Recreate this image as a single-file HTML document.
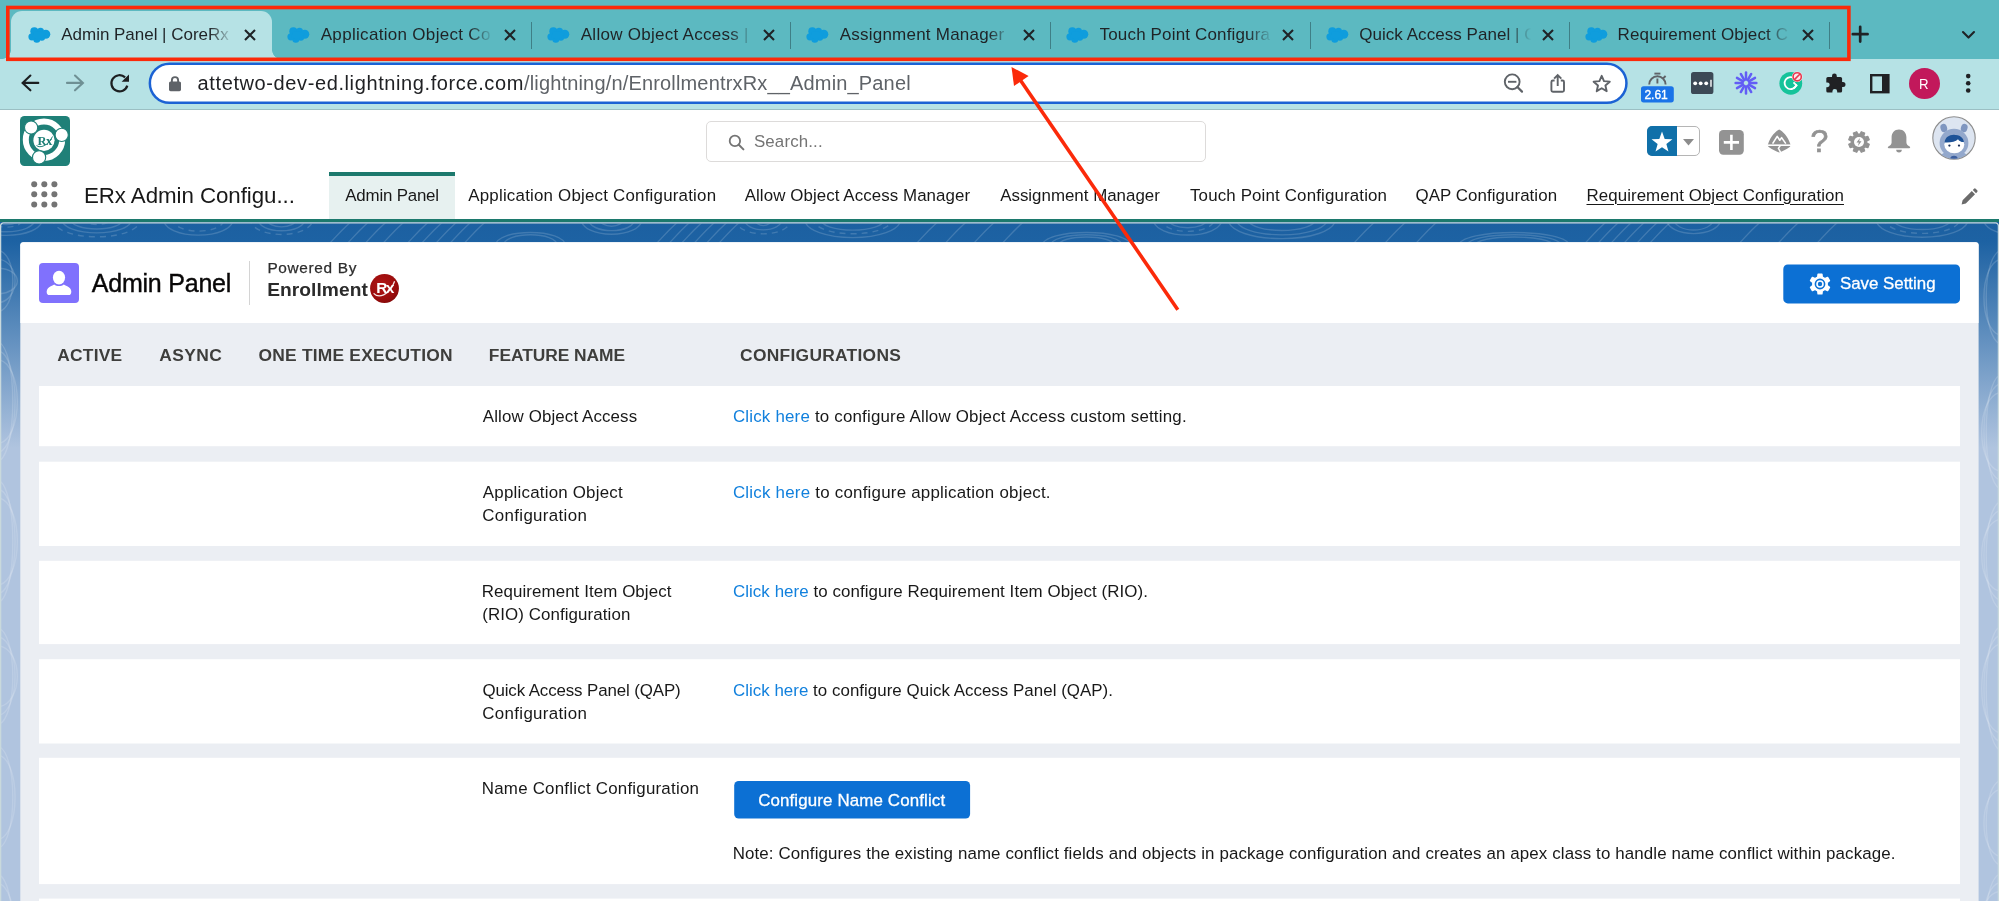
<!DOCTYPE html>
<html lang="en">
<head>
<meta charset="utf-8">
<title>Admin Panel | CoreRx</title>
<style>
html,body{margin:0;padding:0}
body{width:1999px;height:901px;overflow:hidden;position:relative;font-family:"Liberation Sans",sans-serif;background:#fff;color:#181818}
.a{position:absolute}
.t{position:absolute;white-space:nowrap;line-height:1;--f:16.9px;font-size:var(--f);top:calc(var(--b) - var(--f)*0.8465)}
svg{position:absolute;overflow:visible}
/* chrome */
#strip{left:0;top:0;width:1999px;height:59px;background:#5cb9c1}
#atab{left:11px;top:11px;width:261px;height:48px;background:#b6e2e5;border-radius:11px 11px 0 0}
#toolbar{left:0;top:58.5px;width:1999px;height:50px;background:#b6e2e5}
#tbline{left:0;top:108.5px;width:1999px;height:1px;background:#9bbfc3}
#omni{left:148px;top:62.5px;width:1475px;height:36.5px;border:2.5px solid #1b62d4;border-radius:21px;background:#fff}
.tt{--f:17px;--b:39.8px;color:#1f2326}
.fade{-webkit-mask-image:linear-gradient(90deg,#000 0,#000 148px,rgba(0,0,0,.1) 170px,rgba(0,0,0,0) 172px);mask-image:linear-gradient(90deg,#000 0,#000 148px,rgba(0,0,0,.1) 170px,rgba(0,0,0,0) 172px)}
.sep{position:absolute;top:21.5px;width:1.4px;height:27.5px;background:#3f7f86}
/* salesforce */
#sfbg{left:0;top:222px;width:1999px;height:679px;background:linear-gradient(180deg,#1c60a1 0,#1d62a3 20px,#b0c4df 226px,#b0c4df 100%)}
#navline{left:0;top:218.5px;width:1999px;height:4px;background:#1c796d}
#ntab{left:328.5px;top:172px;width:126px;height:46.5px;background:#e7f1f0;border-top:4px solid #1c796d;box-sizing:border-box}
.nv{--f:16.9px;--b:201px;color:#181818}
#card{left:20px;top:242px;width:1958.5px;height:680px;background:#ebeef3;border-radius:3.5px 3.5px 0 0;overflow:hidden}
#chead{left:0;top:0;width:1958px;height:80.5px;background:#fff}
.row{position:absolute;left:19px;width:1921px;background:#fff}
.th{--f:17.4px;--b:360.8px;font-weight:bold;color:#3e3e3c}
.td{--f:16.9px;color:#181818}
.lk{color:#1180dd}
.btn{position:absolute;background:#0c70d4;border-radius:4.5px}
/*LS*/
#tb1{letter-spacing:-0.019px;left:61.24px !important;margin-top:1.0px}
#tb2{letter-spacing:0.310px;left:320.72px !important;margin-top:1.0px}
#tb3{letter-spacing:0.276px;left:580.72px !important;margin-top:1.0px}
#tb4{letter-spacing:0.226px;left:839.72px !important;margin-top:1.0px}
#tb5{letter-spacing:0.153px;left:1099.61px !important;margin-top:1.0px}
#tb6{letter-spacing:0.053px}
#tb7{letter-spacing:0.116px;left:1617.60px !important;margin-top:1.0px}
#tb6o{left:1359.17px !important;margin-top:1.0px}
#urld{letter-spacing:0.608px}
#urlp{letter-spacing:0.165px}
#srch{letter-spacing:0.130px;left:753.94px !important;margin-top:1.0px}
#app{letter-spacing:-0.052px;left:83.99px !important;margin-top:1.0px}
#n1{letter-spacing:-0.201px;left:345.28px !important;margin-top:1.0px}
#n2{letter-spacing:0.209px;left:468.28px !important;margin-top:1.0px}
#n3{letter-spacing:0.076px;left:744.71px !important;margin-top:1.0px}
#n4{letter-spacing:-0.002px;left:1000.22px !important;margin-top:1.0px}
#n5{letter-spacing:0.149px;left:1190.00px !important;margin-top:1.0px}
#n6{letter-spacing:0.065px;left:1415.48px !important;margin-top:1.0px}
#n7{letter-spacing:0.066px;left:1586.50px !important;margin-top:1.0px}
#ttl{letter-spacing:-0.218px;left:91.75px !important;margin-top:0.0px}
#pw{letter-spacing:0.660px;left:267.41px !important;margin-top:0.0px}
#enr{letter-spacing:0.048px;left:267.20px !important;margin-top:1.0px}
#sv{letter-spacing:-0.008px;left:1839.89px !important;margin-top:1.0px}
#h1{letter-spacing:0.232px;left:57.28px !important;margin-top:1.0px}
#h2{letter-spacing:0.439px;left:159.28px !important;margin-top:1.0px}
#h3{letter-spacing:0.208px;left:258.58px !important;margin-top:1.0px}
#h4{letter-spacing:-0.057px;left:488.85px !important;margin-top:1.0px}
#h5{letter-spacing:0.279px;left:740.09px !important;margin-top:1.0px}
#r1a{letter-spacing:0.122px;left:482.86px !important;margin-top:1.0px}
#r1b{letter-spacing:0.198px;left:732.93px !important;margin-top:1.0px}
#r2a{letter-spacing:0.215px;left:482.86px !important;margin-top:1.0px}
#r2a2{letter-spacing:0.340px;left:482.25px !important;margin-top:1.0px}
#r2b{letter-spacing:0.230px;left:732.93px !important;margin-top:1.0px}
#r3a{letter-spacing:0.082px;left:481.80px !important;margin-top:1.0px}
#r3a2{letter-spacing:0.094px;left:482.18px !important;margin-top:1.0px}
#r3b{letter-spacing:0.071px;left:732.93px !important;margin-top:1.0px}
#r4a{letter-spacing:-0.112px;left:482.38px !important;margin-top:1.0px}
#r4a2{letter-spacing:0.340px;left:482.25px !important;margin-top:1.0px}
#r4b{letter-spacing:0.036px;left:732.93px !important;margin-top:1.0px}
#r5a{letter-spacing:0.226px;left:481.80px !important;margin-top:1.0px}
#cnc{letter-spacing:0.135px;left:758.17px !important;margin-top:1.0px}
#note{letter-spacing:0.120px;left:732.71px !important;margin-top:1.0px}
#ext{letter-spacing:-0.065px;left:1644.50px !important;margin-top:0.0px}
/*END*/
</style>
</head>
<body>
<!-- ===== CHROME TAB STRIP ===== -->
<div class="a" id="strip"></div>
<div class="a" id="atab"></div>
<div class="a" style="left:2px;top:50px;width:9px;height:9px;background:radial-gradient(circle at 0 0,rgba(182,226,229,0) 8.5px,#b6e2e5 9.2px)"></div>
<div class="a" style="left:272px;top:50px;width:9px;height:9px;background:radial-gradient(circle at 100% 0,rgba(182,226,229,0) 8.5px,#b6e2e5 9.2px)"></div>
<div class="a" id="toolbar"></div>
<div class="a" id="tbline"></div>
<svg style="left:0;top:0" width="1999" height="110" viewBox="0 0 1999 110"><rect x="149.85" y="63.65" width="1476.6" height="39.1" rx="19.55" fill="#fff" stroke="#1b62d4" stroke-width="2.5"/></svg>

<!-- ===== SALESFORCE ===== -->
<div class="a" id="navline"></div>
<div class="a" id="ntab"></div>
<div class="a" id="sfbg"></div>
<svg style="left:0;top:0" width="1999" height="901" viewBox="0 0 1999 901"><defs><clipPath id="bgc"><rect x="0" y="223.6" width="1999" height="680"/></clipPath></defs><g clip-path="url(#bgc)" fill="none" stroke="#fff" stroke-opacity="0.16" stroke-width="1.4"><path d="M-30.0 218C-30.0 241.1 42.7 241.1 42.7 218"/><path d="M-22.7 218C-22.7 236.3 35.4 236.3 35.4 218"/><path d="M-10.5 218C-10.5 230.2 23.2 230.2 23.2 218" stroke-dasharray="6 5"/><path d="M-8.2 218C-8.2 226.6 20.9 226.6 20.9 218"/><path d="M52.5 218C52.5 243.1 141.1 243.1 141.1 218" stroke-dasharray="6 5"/><path d="M61.4 218C61.4 237.9 132.2 237.9 132.2 218"/><path d="M69.9 218C69.9 232.7 123.6 232.7 123.6 218"/><path d="M82.3 218C82.3 226.6 111.3 226.6 111.3 218" stroke-dasharray="6 5"/><path d="M163.2 218C163.2 240.8 233.5 240.8 233.5 218"/><path d="M172.3 218C172.3 235.5 224.5 235.5 224.5 218" stroke-dasharray="6 5"/><path d="M249.9 218C249.9 239.9 313.1 239.9 313.1 218" stroke-dasharray="6 5"/><path d="M257.5 218C257.5 235.0 305.5 235.0 305.5 218"/><path d="M266.5 218C266.5 229.8 296.5 229.8 296.5 218"/><path d="M327.1 246C335.1 238 341.1 230 353.1 220"/><path d="M344.9 246C352.9 238 358.9 230 370.9 220"/><path d="M362.6 246C370.6 238 376.6 230 388.6 220"/><path d="M380.4 246C388.4 238 394.4 230 406.4 220"/><path d="M404.8 246C412.8 238 418.8 230 430.8 220"/><path d="M419.0 246C427.0 238 433.0 230 445.0 220"/><path d="M433.2 246C441.2 238 447.2 230 459.2 220"/><path d="M447.4 246C455.4 238 461.4 230 473.4 220"/><path d="M461.6 246C469.6 238 475.6 230 487.6 220"/><path d="M495.4 246C495.4 228.0 565.5 228.0 565.5 246"/><path d="M503.4 246C503.4 231.0 557.5 231.0 557.5 246"/><path d="M580.8 218C580.8 239.7 642.3 239.7 642.3 218"/><path d="M588.0 218C588.0 234.9 635.1 234.9 635.1 218"/><path d="M599.5 218C599.5 229.0 623.6 229.0 623.6 218"/><path d="M654.1 246C662.1 238 668.1 230 680.1 220"/><path d="M666.5 246C674.5 238 680.5 230 692.5 220"/><path d="M678.9 246C686.9 238 692.9 230 704.9 220"/><path d="M691.4 246C699.4 238 705.4 230 717.4 220"/><path d="M703.8 246C711.8 238 717.8 230 729.8 220"/><path d="M716.2 246C724.2 238 730.2 230 742.2 220"/><path d="M735.0 218C735.0 239.1 791.5 239.1 791.5 218" stroke-dasharray="6 5"/><path d="M744.1 218C744.1 233.8 782.4 233.8 782.4 218"/><path d="M755.0 218C755.0 228.1 771.6 228.1 771.6 218"/><path d="M804.3 218C804.3 244.1 901.1 244.1 901.1 218"/><path d="M812.7 218C812.7 239.0 892.6 239.0 892.6 218" stroke-dasharray="6 5"/><path d="M820.0 218C820.0 234.2 885.3 234.2 885.3 218"/><path d="M914.0 246C922.0 238 928.0 230 940.0 220"/><path d="M942.6 246C950.6 238 956.6 230 968.6 220"/><path d="M971.1 246C979.1 238 985.1 230 997.1 220"/><path d="M999.7 246C1007.7 238 1013.7 230 1025.7 220"/><path d="M1042.2 246C1042.2 228.0 1130.6 228.0 1130.6 246"/><path d="M1050.2 246C1050.2 231.0 1122.6 231.0 1122.6 246"/><path d="M1058.2 246C1058.2 234.0 1114.6 234.0 1114.6 246"/><path d="M1152.9 218C1152.9 240.7 1222.4 240.7 1222.4 218"/><path d="M1160.6 218C1160.6 235.8 1214.7 235.8 1214.7 218" stroke-dasharray="6 5"/><path d="M1167.8 218C1167.8 231.0 1207.5 231.0 1207.5 218"/><path d="M1227.7 218C1227.7 245.5 1335.8 245.5 1335.8 218"/><path d="M1235.8 218C1235.8 240.5 1327.7 240.5 1327.7 218"/><path d="M1247.4 218C1247.4 234.6 1316.1 234.6 1316.1 218"/><path d="M1351.1 246C1359.1 238 1365.1 230 1377.1 220"/><path d="M1382.2 246C1390.2 238 1396.2 230 1408.2 220"/><path d="M1413.3 246C1421.3 238 1427.3 230 1439.3 220"/><path d="M1458.5 246C1458.5 228.0 1569.5 228.0 1569.5 246"/><path d="M1466.5 246C1466.5 231.0 1561.5 231.0 1561.5 246"/><path d="M1474.5 246C1474.5 234.0 1553.5 234.0 1553.5 246"/><path d="M1582.4 246C1590.4 238 1596.4 230 1608.4 220"/><path d="M1595.4 246C1603.4 238 1609.4 230 1621.4 220"/><path d="M1608.3 246C1616.3 238 1622.3 230 1634.3 220"/><path d="M1621.2 246C1629.2 238 1635.2 230 1647.2 220"/><path d="M1634.2 246C1642.2 238 1648.2 230 1660.2 220"/><path d="M1647.1 246C1655.1 238 1661.1 230 1673.1 220"/><path d="M1666.3 218C1666.3 238.8 1721.0 238.8 1721.0 218"/><path d="M1673.6 218C1673.6 234.0 1713.7 234.0 1713.7 218"/><path d="M1736.7 246C1744.7 238 1750.7 230 1762.7 220"/><path d="M1775.5 246C1783.5 238 1789.5 230 1801.5 220"/><path d="M1814.3 246C1822.3 238 1828.3 230 1840.3 220"/><path d="M1875.6 218C1875.6 243.6 1968.6 243.6 1968.6 218"/><path d="M1884.1 218C1884.1 238.5 1960.2 238.5 1960.2 218" stroke-dasharray="6 5"/><path d="M1892.6 218C1892.6 233.4 1951.7 233.4 1951.7 218"/><path d="M1983.2 218C1983.2 241.0 2055.1 241.0 2055.1 218"/><path d="M1992.7 218C1992.7 235.6 2045.6 235.6 2045.6 218" stroke-dasharray="6 5"/><path d="M1997.4 218C1997.4 231.4 2040.9 231.4 2040.9 218"/><path d="M2009.0 218C2009.0 225.5 2029.3 225.5 2029.3 218" stroke-dasharray="6 5"/><path d="M-4.0 250.0C18.4 250.0 18.4 311.9 -4.0 311.9"/><path d="M-4.0 259.0C21.4 259.0 21.4 302.9 -4.0 302.9"/><path d="M-4.0 268.0C24.4 268.0 24.4 293.9 -4.0 293.9"/><path d="M-4.0 341.4C18.4 341.4 18.4 461.8 -4.0 461.8"/><path d="M-4.0 350.4C21.4 350.4 21.4 452.8 -4.0 452.8"/><path d="M-4.0 359.4C24.4 359.4 24.4 443.8 -4.0 443.8"/><path d="M-4.0 479.7C18.4 479.7 18.4 603.3 -4.0 603.3"/><path d="M-4.0 488.7C21.4 488.7 21.4 594.3 -4.0 594.3"/><path d="M-4.0 497.7C24.4 497.7 24.4 585.3 -4.0 585.3"/><path d="M-4.0 627.6C18.4 627.6 18.4 724.9 -4.0 724.9"/><path d="M-4.0 636.6C21.4 636.6 21.4 715.9 -4.0 715.9"/><path d="M-4.0 645.6C24.4 645.6 24.4 706.9 -4.0 706.9"/><path d="M-4.0 745.8C18.4 745.8 18.4 848.7 -4.0 848.7"/><path d="M-4.0 754.8C21.4 754.8 21.4 839.7 -4.0 839.7"/><path d="M-4.0 873.9C18.4 873.9 18.4 991.2 -4.0 991.2"/><path d="M-4.0 882.9C21.4 882.9 21.4 982.2 -4.0 982.2"/><path d="M2003.0 250.0C1980.6 250.0 1980.6 344.5 2003.0 344.5"/><path d="M2003.0 259.0C1977.6 259.0 1977.6 335.5 2003.0 335.5"/><path d="M2003.0 374.2C1980.6 374.2 1980.6 489.5 2003.0 489.5"/><path d="M2003.0 383.2C1977.6 383.2 1977.6 480.5 2003.0 480.5"/><path d="M2003.0 392.2C1974.6 392.2 1974.6 471.5 2003.0 471.5"/><path d="M2003.0 501.0C1980.6 501.0 1980.6 609.5 2003.0 609.5"/><path d="M2003.0 510.0C1977.6 510.0 1977.6 600.5 2003.0 600.5"/><path d="M2003.0 519.0C1974.6 519.0 1974.6 591.5 2003.0 591.5"/><path d="M2003.0 625.7C1980.6 625.7 1980.6 751.3 2003.0 751.3"/><path d="M2003.0 634.7C1977.6 634.7 1977.6 742.3 2003.0 742.3"/><path d="M2003.0 643.7C1974.6 643.7 1974.6 733.3 2003.0 733.3"/><path d="M2003.0 780.1C1980.6 780.1 1980.6 865.7 2003.0 865.7"/><path d="M2003.0 789.1C1977.6 789.1 1977.6 856.7 2003.0 856.7"/><path d="M2003.0 873.2C1980.6 873.2 1980.6 966.1 2003.0 966.1"/><path d="M2003.0 882.2C1977.6 882.2 1977.6 957.1 2003.0 957.1"/><path d="M2003.0 891.2C1974.6 891.2 1974.6 948.1 2003.0 948.1"/></g><path d="M0.6 901V226A3 3 0 0 1 3.600 222.900H1995.500A3 3 0 0 1 1998.400 226V901" fill="none" stroke="#c9d9dc" stroke-width="1.3"/></svg>
<svg style="left:0;top:0" width="1999" height="901" viewBox="0 0 1999 901">
<path d="M20.300 901V245.200A3 3 0 0 1 23.300 242.200H1975.600A3 3 0 0 1 1978.600 245.200V901Z" fill="#ebeef3"/>
<path d="M20.300 323V245.200A3 3 0 0 1 23.300 242.200H1975.600A3 3 0 0 1 1978.600 245.200V323Z" fill="#fff"/>
<g fill="#fff"><rect x="39" y="386" width="1921" height="60.200"/><rect x="39" y="461.700" width="1921" height="84.300"/><rect x="39" y="560.800" width="1921" height="83.300"/><rect x="39" y="659.200" width="1921" height="84.300"/><rect x="39" y="757.800" width="1921" height="126.300"/><rect x="39" y="898.600" width="1921" height="10"/></g>
</svg>
<!-- boxes -->
<div class="sep" style="left:530.5px"></div>
<div class="sep" style="left:790px"></div>
<div class="sep" style="left:1049.5px"></div>
<div class="sep" style="left:1309.5px"></div>
<div class="sep" style="left:1569px"></div>
<div class="sep" style="left:1828.5px"></div>
<div class="a" id="search" style="left:706px;top:121px;width:498px;height:38.5px;border:1px solid #dddbda;border-radius:5px;background:#fff"></div>
<div class="a" style="left:39px;top:263px;width:40px;height:40px;border-radius:4px;background:#8071fd"></div>
<div class="a" style="left:249px;top:261px;width:1.3px;height:43.5px;background:#d4d4d4"></div>
<svg style="left:0;top:0" width="1999" height="901" viewBox="0 0 1999 901"><rect x="1783.300" y="264.500" width="176.700" height="38.900" rx="4.500" fill="#0c70d4"/><rect x="734.200" y="781" width="235.900" height="37.500" rx="4.500" fill="#0c70d4"/></svg>
<div id="txt" style="position:absolute;left:0;top:0;width:1999px;height:901px;will-change:transform;z-index:4">
<!-- tab titles -->
<div class="t tt fade" id="tb1" style="left:61.5px">Admin Panel | CoreRx</div>
<div class="t tt fade" id="tb2" style="left:321px">Application Object Co</div>
<div class="t tt fade" id="tb3" style="left:581px">Allow Object Access |</div>
<div class="t tt fade" id="tb4" style="left:840px">Assignment Manager</div>
<div class="t tt fade" id="tb5" style="left:1100px">Touch Point Configura</div>
<div class="t tt fade" id="tb6o" style="left:1359.2px"><span id="tb6">Quick Access Panel</span> | Co</div>
<div class="t tt fade" id="tb7" style="left:1619px">Requirement Object C</div>
<!-- url -->
<div class="t" id="url" style="--f:20px;--b:90px;left:197.6px;color:#202124"><span id="urld">attetwo-dev-ed.lightning.force.com</span><span id="urlp" style="color:#5f6368">/lightning/n/EnrollmentrxRx__Admin_Panel</span></div>
<div class="t" id="ext" style="--f:12px;-webkit-text-stroke:0.35px #fff;--b:99.5px;left:1643.5px;color:#fff;z-index:3">2.61</div>
<div class="t" id="avr" style="--f:15.4px;--b:89px;left:1918.5px;color:#fff;z-index:3;transform:scaleX(0.86);transform-origin:0 0">R</div>
<!-- salesforce header -->
<div class="t" id="srch" style="--f:16.9px;--b:147px;left:755px;color:#747474">Search...</div>
<div class="t" id="app" style="--f:22.3px;--b:202.8px;left:85.5px;color:#181818">ERx Admin Configu...</div>
<div class="t nv" id="n1" style="left:345.5px">Admin Panel</div>
<div class="t nv" id="n2" style="left:468.5px">Application Object Configuration</div>
<div class="t nv" id="n3" style="left:745px">Allow Object Access Manager</div>
<div class="t nv" id="n4" style="left:1000px">Assignment Manager</div>
<div class="t nv" id="n5" style="left:1190px">Touch Point Configuration</div>
<div class="t nv" id="n6" style="left:1416px">QAP Configuration</div>
<div class="t nv" id="n7" style="left:1587px;text-decoration:underline;text-underline-offset:2.5px;text-decoration-thickness:1.3px">Requirement Object Configuration</div>
<!-- card header -->
<div class="t" id="ttl" style="--f:25px;--b:292.3px;left:91.5px;color:#080707;-webkit-text-stroke:0.4px #080707">Admin Panel</div>
<div class="t" id="pw" style="--f:15.4px;--b:273px;left:268px;color:#2e2e2e;-webkit-text-stroke:0.25px #2e2e2e">Powered By</div>
<div class="t" id="enr" style="--f:19.2px;--b:295.7px;left:268px;color:#2b2b2b;font-weight:bold">Enrollment</div>
<div class="t" id="sv" style="--f:16.9px;--b:289.6px;left:1840.5px;color:#fff;-webkit-text-stroke:0.3px #fff">Save Setting</div>
<!-- table head -->
<div class="t th" id="h1" style="left:58px">ACTIVE</div>
<div class="t th" id="h2" style="left:160px">ASYNC</div>
<div class="t th" id="h3" style="left:259px">ONE TIME EXECUTION</div>
<div class="t th" id="h4" style="left:490px">FEATURE NAME</div>
<div class="t th" id="h5" style="left:741px">CONFIGURATIONS</div>
<!-- rows -->
<div class="t td" id="r1a" style="--b:422.2px;left:483px">Allow Object Access</div>
<div class="t td" id="r1b" style="--b:422.2px;left:734px"><span class="lk">Click here</span> to configure Allow Object Access custom setting.</div>
<div class="t td" id="r2a" style="--b:498.2px;left:483px">Application Object</div>
<div class="t td" id="r2a2" style="--b:521px;left:483px">Configuration</div>
<div class="t td" id="r2b" style="--b:498.2px;left:734px"><span class="lk">Click here</span> to configure application object.</div>
<div class="t td" id="r3a" style="--b:597.2px;left:483px">Requirement Item Object</div>
<div class="t td" id="r3a2" style="--b:620px;left:483px">(RIO) Configuration</div>
<div class="t td" id="r3b" style="--b:597.2px;left:734px"><span class="lk">Click here</span> to configure Requirement Item Object (RIO).</div>
<div class="t td" id="r4a" style="--b:696px;left:483px">Quick Access Panel (QAP)</div>
<div class="t td" id="r4a2" style="--b:718.9px;left:483px">Configuration</div>
<div class="t td" id="r4b" style="--b:696px;left:734px"><span class="lk">Click here</span> to configure Quick Access Panel (QAP).</div>
<div class="t td" id="r5a" style="--b:794px;left:483px">Name Conflict Configuration</div>
<div class="t" id="cnc" style="--f:16.9px;--b:806px;left:759px;color:#fff;-webkit-text-stroke:0.3px #fff">Configure Name Conflict</div>
<div class="t td" id="note" style="--b:859px;left:734px">Note: Configures the existing name conflict fields and objects in package configuration and creates an apex class to handle name conflict within package.</div>
<div class="t" id="qm" style="--f:32px;--b:152.3px;left:1810.5px;color:#939393;-webkit-text-stroke:0.7px #939393">?</div>
</div>
<!--TEXT-END-->
<!-- chrome icons -->
<svg style="left:27.5px;top:26.5px" width="23" height="16" viewBox="0 0 23 16"><g fill="#0f9ddd"><circle cx="6.3" cy="4.3" r="4"/><circle cx="12.5" cy="4.2" r="3.5"/><circle cx="17.8" cy="7.2" r="4.5"/><circle cx="13.8" cy="10.5" r="3.3"/><circle cx="8.8" cy="12.2" r="3.5"/><circle cx="4" cy="9.8" r="3.6"/><polygon points="6.3,4.3 12.5,4.2 17.8,7.2 13.8,10.5 8.8,12.2 4,9.800"/></g></svg>
<svg style="left:287.1px;top:26.5px" width="23" height="16" viewBox="0 0 23 16"><g fill="#0f9ddd"><circle cx="6.3" cy="4.3" r="4"/><circle cx="12.5" cy="4.2" r="3.5"/><circle cx="17.8" cy="7.2" r="4.5"/><circle cx="13.8" cy="10.5" r="3.3"/><circle cx="8.8" cy="12.2" r="3.5"/><circle cx="4" cy="9.8" r="3.6"/><polygon points="6.3,4.3 12.5,4.2 17.8,7.2 13.8,10.5 8.8,12.2 4,9.800"/></g></svg>
<svg style="left:546.8px;top:26.5px" width="23" height="16" viewBox="0 0 23 16"><g fill="#0f9ddd"><circle cx="6.3" cy="4.3" r="4"/><circle cx="12.5" cy="4.2" r="3.5"/><circle cx="17.8" cy="7.2" r="4.5"/><circle cx="13.8" cy="10.5" r="3.3"/><circle cx="8.8" cy="12.2" r="3.5"/><circle cx="4" cy="9.8" r="3.6"/><polygon points="6.3,4.3 12.5,4.2 17.8,7.2 13.8,10.5 8.8,12.2 4,9.800"/></g></svg>
<svg style="left:806.4px;top:26.5px" width="23" height="16" viewBox="0 0 23 16"><g fill="#0f9ddd"><circle cx="6.3" cy="4.3" r="4"/><circle cx="12.5" cy="4.2" r="3.5"/><circle cx="17.8" cy="7.2" r="4.5"/><circle cx="13.8" cy="10.5" r="3.3"/><circle cx="8.8" cy="12.2" r="3.5"/><circle cx="4" cy="9.8" r="3.6"/><polygon points="6.3,4.3 12.5,4.2 17.8,7.2 13.8,10.5 8.8,12.2 4,9.800"/></g></svg>
<svg style="left:1066.1px;top:26.5px" width="23" height="16" viewBox="0 0 23 16"><g fill="#0f9ddd"><circle cx="6.3" cy="4.3" r="4"/><circle cx="12.5" cy="4.2" r="3.5"/><circle cx="17.8" cy="7.2" r="4.5"/><circle cx="13.8" cy="10.5" r="3.3"/><circle cx="8.8" cy="12.2" r="3.5"/><circle cx="4" cy="9.8" r="3.6"/><polygon points="6.3,4.3 12.5,4.2 17.8,7.2 13.8,10.5 8.8,12.2 4,9.800"/></g></svg>
<svg style="left:1325.8px;top:26.5px" width="23" height="16" viewBox="0 0 23 16"><g fill="#0f9ddd"><circle cx="6.3" cy="4.3" r="4"/><circle cx="12.5" cy="4.2" r="3.5"/><circle cx="17.8" cy="7.2" r="4.5"/><circle cx="13.8" cy="10.5" r="3.3"/><circle cx="8.8" cy="12.2" r="3.5"/><circle cx="4" cy="9.8" r="3.6"/><polygon points="6.3,4.3 12.5,4.2 17.8,7.2 13.8,10.5 8.8,12.2 4,9.800"/></g></svg>
<svg style="left:1585.4px;top:26.5px" width="23" height="16" viewBox="0 0 23 16"><g fill="#0f9ddd"><circle cx="6.3" cy="4.3" r="4"/><circle cx="12.5" cy="4.2" r="3.5"/><circle cx="17.8" cy="7.2" r="4.5"/><circle cx="13.8" cy="10.5" r="3.3"/><circle cx="8.8" cy="12.2" r="3.5"/><circle cx="4" cy="9.8" r="3.6"/><polygon points="6.3,4.3 12.5,4.2 17.8,7.2 13.8,10.5 8.8,12.2 4,9.800"/></g></svg>
<svg style="left:244px;top:28.5px" width="12" height="12" viewBox="0 0 12 12"><path d="M1 1L11 11M11 1L1 11" stroke="#1f2326" stroke-width="2.1" fill="none"/></svg>
<svg style="left:503.6px;top:28.5px" width="12" height="12" viewBox="0 0 12 12"><path d="M1 1L11 11M11 1L1 11" stroke="#1f2326" stroke-width="2.1" fill="none"/></svg>
<svg style="left:763px;top:28.5px" width="12" height="12" viewBox="0 0 12 12"><path d="M1 1L11 11M11 1L1 11" stroke="#1f2326" stroke-width="2.1" fill="none"/></svg>
<svg style="left:1022.5px;top:28.5px" width="12" height="12" viewBox="0 0 12 12"><path d="M1 1L11 11M11 1L1 11" stroke="#1f2326" stroke-width="2.1" fill="none"/></svg>
<svg style="left:1282px;top:28.5px" width="12" height="12" viewBox="0 0 12 12"><path d="M1 1L11 11M11 1L1 11" stroke="#1f2326" stroke-width="2.1" fill="none"/></svg>
<svg style="left:1542px;top:28.5px" width="12" height="12" viewBox="0 0 12 12"><path d="M1 1L11 11M11 1L1 11" stroke="#1f2326" stroke-width="2.1" fill="none"/></svg>
<svg style="left:1801.5px;top:28.5px" width="12" height="12" viewBox="0 0 12 12"><path d="M1 1L11 11M11 1L1 11" stroke="#1f2326" stroke-width="2.1" fill="none"/></svg>
<svg style="left:1851.8px;top:26.3px" width="16.4" height="16.4" viewBox="0 0 16.4 16.4"><path d="M8.2 0.8V15.6M0.8 8.2H15.6" stroke="#1f2326" stroke-width="2.7" stroke-linecap="round" fill="none"/></svg>
<svg style="left:1962px;top:31px" width="13" height="8" viewBox="0 0 13 8"><path d="M1 1L6.5 6.6L12 1" stroke="#1f2326" stroke-width="2.1" fill="none" stroke-linecap="round" stroke-linejoin="round"/></svg>
<svg style="left:20px;top:73px" width="22" height="20" viewBox="0 0 22 20"><path d="M18.300 9.900H2.800M10.400 2.500L2.600 9.900L10.400 17.300" stroke="#1c1f21" stroke-width="2.1" fill="none" stroke-linecap="round" stroke-linejoin="miter"/></svg>
<svg style="left:64px;top:73px" width="22" height="20" viewBox="0 0 22 20"><path d="M3 9.900H18.700M11 2.500L18.900 9.900L11 17.300" stroke="#6f9094" stroke-width="2.1" fill="none" stroke-linecap="round" stroke-linejoin="miter"/></svg>
<svg style="left:109px;top:73px" width="22" height="20" viewBox="0 0 22 20"><path d="M18.3 12.6A8.1 8.1 0 1 1 16.1 4.4" stroke="#1c1f21" stroke-width="2.2" fill="none"/><path d="M20 1.4V8.7H12.6Z" fill="#1c1f21"/></svg>
<svg style="left:169px;top:76px" width="12" height="16" viewBox="0 0 12 16"><rect x="0" y="5.4" width="12" height="9.8" rx="1.6" fill="#5f6368"/><path d="M2.9 6V4.2A3.1 3.1 0 0 1 9.1 4.2V6" stroke="#5f6368" stroke-width="1.9" fill="none"/></svg>
<svg style="left:1502px;top:72px" width="22" height="22" viewBox="0 0 22 22"><circle cx="10.2" cy="9.8" r="7.4" stroke="#5f6368" stroke-width="1.9" fill="none"/><path d="M6 9.8H14.4" stroke="#5f6368" stroke-width="1.9"/><path d="M15.4 15L20 19.6" stroke="#5f6368" stroke-width="2.2" stroke-linecap="round"/></svg>
<svg style="left:1549px;top:73px" width="18" height="21" viewBox="0 0 18 21"><path d="M5.600 7.500H3.900A1.500 1.500 0 0 0 2.400 9V17.200A1.500 1.500 0 0 0 3.900 18.700H13.500A1.500 1.500 0 0 0 15 17.200V9A1.500 1.500 0 0 0 13.500 7.500H11.800" stroke="#5f6368" stroke-width="1.9" fill="none"/><path d="M8.700 13V2.400M5.100 5.600L8.700 2L12.300 5.600" stroke="#5f6368" stroke-width="1.9" fill="none" stroke-linejoin="miter"/></svg>
<svg style="left:1590px;top:72px" width="24" height="24" viewBox="0 0 24 24"><polygon points="11.70,3.80 13.99,9.14 19.78,9.67 15.41,13.51 16.70,19.18 11.70,16.20 6.70,19.18 7.99,13.51 3.62,9.67 9.41,9.14" stroke="#5f6368" stroke-width="1.9" fill="none" stroke-linejoin="round"/></svg>
<svg style="left:1641px;top:70px" width="33" height="33" viewBox="0 0 33 33"><path d="M8.2 14.5A8.2 8.2 0 0 1 24.6 14.5" stroke="#5f6368" stroke-width="1.9" fill="none"/><path d="M13.4 3.6H19.4" stroke="#5f6368" stroke-width="1.9"/><path d="M16.4 8.5V13.5" stroke="#5f6368" stroke-width="1.9"/><path d="M22.2 8.2L24.6 6" stroke="#5f6368" stroke-width="1.9"/><rect x="0" y="16.2" width="32.8" height="16.2" rx="2.6" fill="#1a73e8"/></svg>
<svg style="left:1690.6px;top:72.2px" width="22.4" height="22" viewBox="0 0 22.4 22"><rect width="22.4" height="22" rx="2.6" fill="#3c4956"/><circle cx="4.2" cy="11.3" r="1.9" fill="#fff"/><circle cx="9.7" cy="11.3" r="1.9" fill="#fff"/><circle cx="15.2" cy="11.3" r="1.9" fill="#fff"/><rect x="19.3" y="7.8" width="1.4" height="7" fill="#fff"/></svg>
<svg style="left:1734.3px;top:71.3px" width="24" height="24" viewBox="0 0 24 24"><g stroke="#625df5" stroke-width="2.5" stroke-linecap="round"><line x1="15.40" y1="12.00" x2="22.40" y2="12.00"/><line x1="14.94" y1="13.70" x2="21.01" y2="17.20"/><line x1="13.70" y1="14.94" x2="17.20" y2="21.01"/><line x1="12.00" y1="15.40" x2="12.00" y2="22.40"/><line x1="10.30" y1="14.94" x2="6.80" y2="21.01"/><line x1="9.06" y1="13.70" x2="2.99" y2="17.20"/><line x1="8.60" y1="12.00" x2="1.60" y2="12.00"/><line x1="9.06" y1="10.30" x2="2.99" y2="6.80"/><line x1="10.30" y1="9.06" x2="6.80" y2="2.99"/><line x1="12.00" y1="8.60" x2="12.00" y2="1.60"/><line x1="13.70" y1="9.06" x2="17.20" y2="2.99"/><line x1="14.94" y1="10.30" x2="21.01" y2="6.80"/></g></svg>
<svg style="left:1778px;top:70px" width="26" height="26" viewBox="0 0 26 26"><circle cx="12.800" cy="13.300" r="11.400" fill="#15c39a"/><path d="M16.800 8.800A6 6 0 1 0 18.300 15" stroke="#fff" stroke-width="1.800" fill="none" stroke-linecap="round"/><path d="M14.200 15.400H18.600V11" stroke="#fff" stroke-width="1.800" fill="none" stroke-linejoin="miter" transform="rotate(-45 18.6 15.4) translate(0 0)"/><circle cx="19.200" cy="6.800" r="5.300" fill="#fbe9ec"/><circle cx="19.200" cy="6.800" r="4.100" stroke="#e8384f" stroke-width="1.600" fill="none"/><path d="M16.400 9.600L22 4" stroke="#e8384f" stroke-width="1.600"/></svg>
<svg style="left:1825.5px;top:72.5px" width="20" height="20" viewBox="0 0 20 20"><path fill="#202124" d="M8.4 0.6a2.4 2.4 0 0 1 2.4 2.4v0.9h3.7a1.6 1.6 0 0 1 1.6 1.6v3.4h0.9a2.5 2.5 0 0 1 0 5h-0.9v4a1.6 1.6 0 0 1-1.6 1.6h-3.3v-1a2.4 2.4 0 0 0-4.8 0v1H1.9A1.6 1.6 0 0 1 .3 17.9v-3.7h1a2.4 2.4 0 0 0 0-4.8h-1V5.5A1.6 1.6 0 0 1 1.9 3.9H6V3A2.4 2.4 0 0 1 8.4 0.6z"/></svg>
<svg style="left:1870px;top:73.6px" width="19.6" height="19.4" viewBox="0 0 19.6 19.4"><rect x="1.2" y="1.2" width="17.2" height="17" stroke="#202124" stroke-width="2.4" fill="none"/><rect x="12" y="1.2" width="6.4" height="17" fill="#202124"/></svg>
<div class="a" style="left:1908.8px;top:67.9px;width:30.8px;height:30.8px;border-radius:50%;background:#c2185b"></div>
<svg style="left:1965px;top:73px" width="6" height="21" viewBox="0 0 6 21"><circle cx="3.2" cy="3.1" r="2.3" fill="#202124"/><circle cx="3.2" cy="10.3" r="2.3" fill="#202124"/><circle cx="3.2" cy="17.5" r="2.3" fill="#202124"/></svg>
<!-- salesforce header icons -->
<svg style="left:20px;top:116px;will-change:transform" width="50" height="50" viewBox="0 0 50 50"><rect width="50" height="50" rx="4.5" fill="#1f8078"/><circle cx="24" cy="23.8" r="18.2" stroke="#fff" stroke-width="6" fill="none"/><circle cx="24" cy="24.3" r="10.6" fill="#fff"/><g fill="#fff" stroke="#1f8078" stroke-width="1.1"><circle cx="11.1" cy="11.5" r="6.6"/><circle cx="41.7" cy="18.9" r="6.6"/><circle cx="19.1" cy="41.4" r="6.6"/></g><text x="17.6" y="28.6" font-family="Liberation Serif,serif" font-weight="bold" font-size="12.5" fill="#1f8078" letter-spacing="-0.6">Rx</text><path d="M16.5 29.5C20 32.5 28 30 32.5 20.5" stroke="#1f8078" stroke-width="1" fill="none"/></svg>
<svg style="left:31px;top:181px" width="27" height="27" viewBox="0 0 27 27"><circle cx="3.2" cy="3.2" r="3" fill="#747474"/><circle cx="3.2" cy="13.3" r="3" fill="#747474"/><circle cx="3.2" cy="23.4" r="3" fill="#747474"/><circle cx="13.3" cy="3.2" r="3" fill="#747474"/><circle cx="13.3" cy="13.3" r="3" fill="#747474"/><circle cx="13.3" cy="23.4" r="3" fill="#747474"/><circle cx="23.4" cy="3.2" r="3" fill="#747474"/><circle cx="23.4" cy="13.3" r="3" fill="#747474"/><circle cx="23.4" cy="23.4" r="3" fill="#747474"/></svg>
<svg style="left:727.5px;top:133.5px" width="17" height="17" viewBox="0 0 17 17"><circle cx="6.9" cy="6.9" r="5.2" stroke="#747474" stroke-width="1.8" fill="none"/><path d="M10.8 10.8L15.4 15.4" stroke="#747474" stroke-width="2" stroke-linecap="round"/></svg>
<div class="a" style="left:1647.2px;top:125.5px;width:50.7px;height:28.5px;border:1px solid #b5b5b5;border-radius:5px;background:#fff;box-sizing:content-box"></div>
<div class="a" style="left:1647.2px;top:125.5px;width:30px;height:30.5px;border-radius:5px 0 0 5px;background:#1070a9"></div>
<svg style="left:1650px;top:130px" width="24" height="24" viewBox="0 0 24 24"><polygon points="12.00,1.60 14.70,8.88 22.46,9.20 16.37,14.02 18.47,21.50 12.00,17.20 5.53,21.50 7.63,14.02 1.54,9.20 9.30,8.88" fill="#fff"/></svg>
<svg style="left:1682.6px;top:138.6px" width="11" height="7" viewBox="0 0 11 7"><path d="M0 0H11L5.5 6.6Z" fill="#8c8c8c"/></svg>
<svg style="left:1719.4px;top:130px" width="25" height="25" viewBox="0 0 25 25"><rect width="24.8" height="24.8" rx="4.2" fill="#939393"/><path d="M12.4 4.8V20M4.8 12.4H20" stroke="#fff" stroke-width="2.6"/></svg>
<svg style="left:1767px;top:129px" width="24" height="24" viewBox="0 0 24 24"><path fill="#939393" d="M12.2 0.4C15.5 2.2 20.6 6.6 23.4 15.2C23.8 16.6 23.3 17.8 22 18.6C19 20.6 15.6 22.6 12.2 23.4C8.8 22.6 5.4 20.6 2.4 18.6C1.1 17.8 0.6 16.6 1 15.2C3.8 6.6 8.9 2.2 12.2 0.4Z"/><path d="M5.6 14.6L10.2 7.4L12.8 11.2L14.6 8.6L18.8 14.6" stroke="#fff" stroke-width="1.6" fill="none" stroke-linejoin="round"/><path d="M0.5 16.2H24" stroke="#fff" stroke-width="1.6"/><path d="M13.4 16.4L11.4 19.4L13.6 23.4" stroke="#fff" stroke-width="1.5" fill="none"/></svg>
<svg style="left:1846.6px;top:129.6px" width="24" height="24" viewBox="0 0 24 24"><polygon points="22.34,10.19 22.34,13.81 19.52,14.06 18.78,15.86 20.59,18.04 18.04,20.59 15.86,18.78 14.06,19.52 13.81,22.34 10.19,22.34 9.94,19.52 8.14,18.78 5.96,20.59 3.41,18.04 5.22,15.86 4.48,14.06 1.66,13.81 1.66,10.19 4.48,9.94 5.22,8.14 3.41,5.96 5.96,3.41 8.14,5.22 9.94,4.48 10.19,1.66 13.81,1.66 14.06,4.48 15.86,5.22 18.04,3.41 20.59,5.96 18.78,8.14 19.52,9.94" fill="#939393" stroke="#939393" stroke-width="1.3" stroke-linejoin="round" transform="rotate(22.5 12 12)"/><circle cx="12" cy="12" r="5" fill="#fff"/><path d="M12.900 7.900L9.500 12.600H11.800L11 16.100L14.500 11.300H12.200Z" fill="#939393"/></svg>
<svg style="left:1887px;top:129px" width="24" height="24" viewBox="0 0 24 24"><path fill="#939393" d="M12 0.4C16.6 0.4 19.4 3.8 19.4 8.2V13.4C19.4 15.4 21 16.6 22.6 17.4C23.6 17.9 23.3 19.2 22.2 19.2H1.8C0.7 19.2 0.4 17.9 1.4 17.4C3 16.6 4.6 15.4 4.6 13.4V8.2C4.6 3.8 7.4 0.4 12 0.4Z"/><path fill="#939393" d="M9.2 20.8H14.8A2.8 2.6 0 0 1 9.2 20.8Z"/></svg>
<svg style="left:1932px;top:115.5px" width="44" height="44" viewBox="0 0 44 44"><defs><clipPath id="avc"><circle cx="22" cy="22" r="20.8"/></clipPath></defs><circle cx="22" cy="22" r="21.2" fill="#dde5f1" stroke="#8e8e8e" stroke-width="1.1"/><g clip-path="url(#avc)"><ellipse cx="11.8" cy="12" rx="3.3" ry="4.2" fill="#7f96c0" transform="rotate(-18 11.8 12)"/><ellipse cx="32.2" cy="12" rx="3.3" ry="4.2" fill="#7f96c0" transform="rotate(18 32.2 12)"/><ellipse cx="22" cy="27" rx="14.4" ry="14.2" fill="#93a8cc"/><path fill="#93a8cc" d="M7 44C8 37 14 35 22 35C30 35 36 37 37 44Z"/><ellipse cx="22.3" cy="28.6" rx="10" ry="8.7" fill="#fff"/><path fill="#1d5297" d="M12.6 26.4C13 21.6 17 18.8 21.8 18.8C27.400 18.800 31.400 21.600 32 26C29.400 26.200 27.200 25.200 26 23.200C23.600 25.600 18.400 26.800 12.600 26.400Z"/><circle cx="17.4" cy="29.6" r="1.15" fill="#1b2f5a"/><circle cx="27" cy="29.6" r="1.15" fill="#1b2f5a"/><ellipse cx="22" cy="42.6" rx="3.6" ry="2.8" fill="#3c5f9e"/></g></svg>
<svg style="left:1961px;top:188px" width="17" height="17" viewBox="0 0 17 17"><path fill="#6b6b6b" d="M0.6 16.4L1.6 12.2L10.8 3L14 6.2L4.800 15.400Z M11.8 2L13 0.8A1.200 1.200 0 0 1 14.700 0.800L16.200 2.300A1.200 1.200 0 0 1 16.200 4L15 5.200Z"/></svg>
<!-- card icons -->
<svg style="left:39px;top:263px" width="40" height="40" viewBox="0 0 40 40"><ellipse cx="20" cy="14.6" rx="6.1" ry="6.8" fill="#fff"/><path fill="#fff" d="M15.2 21.4C17.800 23.600 22.200 23.600 24.800 21.400C27 22.600 29.800 23.800 31 25.200C32.600 27 32.800 30 31.400 31.400C31 31.800 30.400 32 29.800 32H10.200C9.600 32 9 31.800 8.600 31.400C7.200 30 7.400 27 9 25.200C10.200 23.800 13 22.600 15.200 21.400Z"/></svg>
<svg style="left:369.5px;top:274.4px;will-change:transform" width="29" height="29" viewBox="0 0 29 29"><defs><radialGradient id="rxg" cx="0.42" cy="0.38" r="0.7"><stop offset="0" stop-color="#b01414"/><stop offset="0.7" stop-color="#9a0c0c"/><stop offset="1" stop-color="#7e0808"/></radialGradient></defs><circle cx="14.5" cy="14.5" r="14.4" fill="url(#rxg)"/><text x="6.2" y="19.2" font-family="Liberation Sans,sans-serif" font-weight="bold" font-size="15.5" fill="#fff" letter-spacing="-1.6">Rx</text><path d="M3.600 19.400C8 24.200 19 22.600 24.600 7.200" stroke="#fff" stroke-width="1.3" fill="none" opacity="0.9"/></svg>
<svg style="left:1807.9px;top:271.9px" width="24" height="24" viewBox="0 0 24 24"><polygon points="21.82,10.13 21.82,13.87 18.94,14.26 17.42,16.88 18.53,19.57 15.29,21.44 13.52,19.14 10.48,19.14 8.71,21.44 5.47,19.57 6.58,16.88 5.06,14.26 2.18,13.87 2.18,10.13 5.06,9.74 6.58,7.12 5.47,4.43 8.71,2.56 10.48,4.86 13.52,4.86 15.29,2.56 18.53,4.43 17.42,7.12 18.94,9.74" fill="#fff" stroke="#fff" stroke-width="1.5" stroke-linejoin="round" transform="rotate(30 12 12)"/><circle cx="12" cy="12" r="4.600" fill="none" stroke="#0c70d4" stroke-width="1.600"/><circle cx="12" cy="12" r="2.200" fill="#0c70d4"/></svg>
<!--ICONS4-->
<!-- red annotation -->
<svg id="annot" style="left:0;top:0;z-index:6" width="1999" height="901" viewBox="0 0 1999 901"><rect x="7.8" y="7.5" width="1841.1" height="51.8" fill="none" stroke="#fb2a0a" stroke-width="3.6"/><path d="M1177.8 309.7L1019.6 79" stroke="#fb2a0a" stroke-width="3.6" stroke-linecap="butt"/><polygon points="1011.5,67 1028.6,76 1014,86" fill="#fb2a0a"/></svg>
</body>
</html>
